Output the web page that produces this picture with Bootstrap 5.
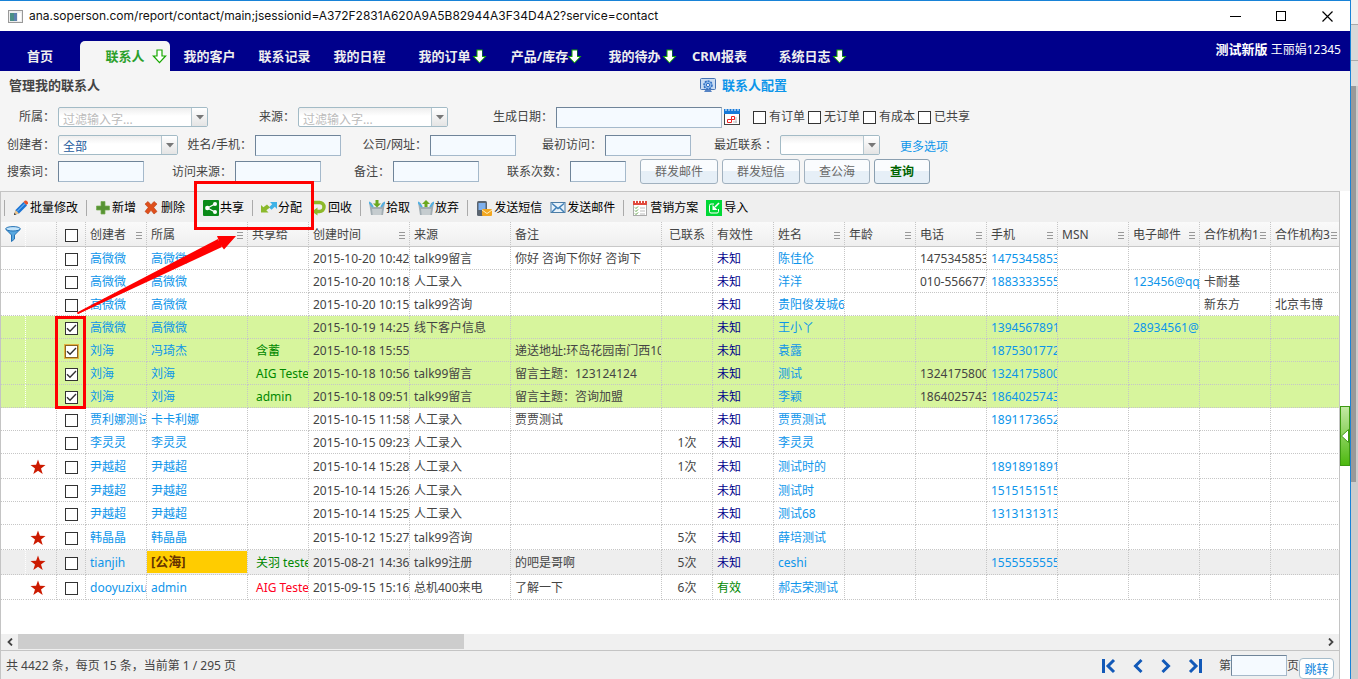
<!DOCTYPE html>
<html lang="zh-CN">
<head>
<meta charset="utf-8">
<meta name="viewport" content="width=device-width, initial-scale=1">
<title>管理我的联系人</title>
<link href="https://cdn.jsdelivr.net/npm/bootstrap@5.3.0/dist/css/bootstrap.min.css" rel="stylesheet">
<style>
body{font-family:"Noto Sans","Noto Sans CJK SC",sans-serif;font-size:12px;line-height:16px;color:#444;background:#d4d4d4;overflow:hidden}
a{color:#0d95ea;text-decoration:none}
button,input,select{font:inherit;line-height:16px}
svg{flex:none;display:block}
.app-window{background:#fff;border-top:1px solid #1883d7;border-right:1px solid #1883d7;min-width:0}
.title-row{height:30px;padding:0 8px;color:#111;font-family:Inter,sans-serif;gap:6px}
.title-row button{border:0;background:none;padding:0;width:46px;display:flex;justify-content:center}
.title-row .win-buttons{margin-right:-8px}
/* main menu */
.main-menu{background:#00008b;height:40px;color:#fff}
.main-menu a{color:#eee;font-size:13px;font-weight:700;width:75px;height:30px;line-height:30px;text-align:center;position:relative;white-space:nowrap}
.main-menu a.home-link{width:80px}
.main-menu a.wide{width:95px}
.main-menu a.current{width:90px;background:#f5f5f5;color:#2ca02c;border-radius:5px 5px 0 0;margin-right:2px}
.main-menu a svg{position:absolute;right:5px;top:8px}
.main-menu a.current svg{right:3px}
.user-box{padding:10px 9px 0 0}
.user-box b{font-size:13px}
/* filter form */
.filters{background:#f5f5f5;height:120px}
.filters h1{font-size:13px;line-height:20px;font-weight:700;margin:0;padding:4px 0 0 9px;width:700px}
.heading-row{height:32px}
.config-link{font-size:13px;font-weight:700;gap:6px;padding-top:6px}
.filter-row{height:28px;align-items:center;white-space:nowrap}
.filter-row.last-row{height:25px}
.filter-row>label.cap{flex:none;text-align:right;padding-right:3px}
.w1{width:58px}.w2{width:90px}.w3{width:108px}.w4{width:77px}.w5{width:89px}.w6{width:91px}.w7{width:72px}
.field{border:1px solid #a5b9cb;border-top-color:#6f8499;border-left-color:#6f8499;background:#f5faff;width:86px;height:21px;padding:0 3px;border-radius:0;flex:none;outline:0}
.field.date-field{width:166px}
.field.short-field{width:56px}
.calendar-icon{margin:0 13px 0 2px}
.action-set{margin-left:14px}
.combo{display:flex;width:150px;height:20px;border:1px solid #a3bbc6;border-radius:2px;background:linear-gradient(#eee,#fff 8px);flex:none;overflow:hidden}
.combo.c120{width:120px}.combo.c100{width:100px}
.combo input,.combo select{border:0;background:none;flex:1;min-width:0;padding:3px 0 0 4px;height:19px;color:#1c5a9c;appearance:none;outline:0}
.combo input::placeholder{color:#bbb;opacity:1}
.combo button{width:16px;border:0;border-left:1px solid #b5c6ce;background:linear-gradient(#fff,#e4e4e4);padding:0;display:flex;align-items:center;justify-content:center}
.tick{appearance:none;width:13px;height:13px;border:1px solid #333;background:#fff;margin:0;flex:none;display:block}
.tick:checked{background:#fff url("data:image/svg+xml,%3Csvg xmlns='http://www.w3.org/2000/svg' width='11' height='11'%3E%3Cpath d='M1 5.2l3 3L10 2' fill='none' stroke='%23333' stroke-width='1.4'/%3E%3C/svg%3E")}
.tick.focused{border-color:#8a6420;box-shadow:0 0 0 1px #e3b341}
.tick-label{gap:3px;margin-right:3px}
.soft-btn{height:25px;border:1px solid #a1b1bf;border-radius:3px;background:linear-gradient(#fafcfe 0 48%,#e6eff7 50%);color:#666;width:78px;margin-right:4px;padding:0}
.soft-btn.w66{width:66px}.soft-btn.w56{width:56px}
.soft-btn.go{color:#006400;font-weight:700;border-color:#8a9fb0}
/* grid */
.grid-panel{border:1px solid #c4c4c4;border-bottom:0;margin-right:10px;min-height:0}
.tool-row{background:#efefef;height:30px;gap:8px;padding:2px 0 0 3px}
.tool-row button{border:0;background:none;padding:0;color:#000;display:flex;align-items:center;gap:1px;white-space:nowrap}
.tool-row button.roomy{gap:2px}
.tool-row .divider{width:1px;height:16px;background:#aaa}
.share-gap{margin-left:10px}
.grid-scroll{overflow:hidden}
.contacts{table-layout:fixed;width:1341px;border-collapse:separate;border-spacing:0}
.contacts th,.contacts td{border-right:1px dotted #c6c6c6;border-bottom:1px dotted #c6c6c6;padding:2px 0 0 4px;height:23px;line-height:18px;overflow:hidden;white-space:nowrap;font-weight:400;vertical-align:middle}
.contacts th{height:25px;line-height:20px;background:linear-gradient(#fafafa,#efefef);border-bottom:1px solid #c8c8c8}
.contacts th .head-cell{display:flex;align-items:center;justify-content:space-between;padding-right:4px}
.contacts th .head-cell i{width:6px;height:7px;flex:none;background:repeating-linear-gradient(#999 0 1px,transparent 1px 3px)}
.contacts th:first-child,.contacts td:first-child{border-right-color:#fff}
.contacts .mid{text-align:center;padding:2px 0 0}
.contacts th.mid:first-child{padding:0}
.contacts .mid .tick,.contacts .mid svg{margin:0 auto}
.contacts .star-cell{padding:2px 0 0 4px}
.contacts .shared{padding-left:8px}
.contacts tr.starred td{height:25px}
.contacts tr.chosen td{background:#d7f59d}
.contacts tr.hovered td{background:#eee}
.contacts td.public-pool{padding:0}
.public-pool span{display:block;background:#fc0;color:#630;font-weight:700;font-size:13px;height:22px;line-height:21px;padding-left:4px}
.unknown{color:#00008b}
.ok-text{color:#080}
.warn-text{color:#f02}
.scroll-row{height:16px;background:#f0f0f0}
.scroll-row span{width:17px;display:flex;align-items:center;justify-content:center}
.scroll-row .thumb{width:33.3%;height:15px;background:#cdcdcd}
.foot-row{height:29px;background:#efefef;border-top:1px solid #c4c4c4;padding:1px 5px 0}
.foot-row .page-link-btn{border:0;background:none;padding:0}
.jump-btn{border:1px solid #a5bccb;border-radius:4px;background:#fff;color:#0d85dd;width:35px;height:21px;padding:3px 0 0;align-self:flex-end;line-height:14px}
.side-handle{position:absolute;right:0;top:405px;width:10px;height:60px;border:1px solid #3d9a12;background:linear-gradient(#c3e9a4,#4db80f);padding:0;display:flex;align-items:center}
.outer-strip{width:7px;flex:none;background:#ccc}
.outer-strip .s1{height:25px;background:#f0f0f0;border-bottom:1px solid #aaa}
.outer-strip .s2{height:36px;background:#d8d8d8;border-bottom:1px solid #aaa}
.outer-strip .s3{height:25px;background:#ddd}
.outer-strip .s4{height:396px;background:#999;margin-right:2px}
.annotation{position:absolute;left:0;top:0;pointer-events:none}
</style>
<script src="https://cdn.jsdelivr.net/npm/bootstrap@5.3.0/dist/js/bootstrap.bundle.min.js"></script>
</head>
<body>
<svg width="0" height="0" class="position-absolute" aria-hidden="true">
 <symbol id="down" viewBox="0 0 15 15"><path d="M5 1h5v6h3.6L7.5 13.6 1.4 7H5z" fill="#fff" stroke="#18a800" stroke-width="1.2"/></symbol>
 <symbol id="down-white" viewBox="0 0 15 15"><path d="M4.500 .5h6v6.500h4L7.500 14.500 .5 7h4z" fill="#18a800"/><path d="M5.500 1.500h4.500V8h2.500L7.500 13.200 2.500 8h3z" fill="#fff"/></symbol>
 <symbol id="caret" viewBox="0 0 8 5"><path d="M0 0h8L4 4.500z" fill="#777"/></symbol>
 <symbol id="star" viewBox="0 0 16 16"><path d="M8 .5l1.900 5.300 5.600.1-4.500 3.500 1.700 5.600L8 11.800 3.300 15 5 9.400.5 5.900l5.600-.1z" fill="#cc1a00"/></symbol>
</svg>
<div class="d-flex vh-100 position-relative">
 <div class="app-window d-flex flex-column flex-grow-1 position-relative">
  <header class="title-row d-flex align-items-center">
   <svg width="15" height="13" viewBox="0 0 15 13"><rect x=".5" y=".5" width="14" height="12" fill="#eee" stroke="#999"/><rect x="2" y="3" width="7" height="8" fill="#4b8f86"/><rect x="6" y="3" width="3" height="8" fill="#5d80b0"/><rect x="10" y="3" width="3" height="8" fill="#fff"/></svg>
   <span class="flex-grow-1">ana.soperson.com/report/contact/main;jsessionid=A372F2831A620A9A5B82944A3F34D4A2?service=contact</span>
   <div class="d-flex win-buttons">
    <button aria-label="最小化"><svg width="11" height="11"><path d="M0 5.500h11" stroke="#000"/></svg></button>
    <button aria-label="最大化"><svg width="11" height="11"><rect x=".5" y=".5" width="9" height="9" fill="none" stroke="#000"/></svg></button>
    <button aria-label="关闭"><svg width="11" height="11"><path d="M.5.5l10 10M10.500.5l-10 10" stroke="#000" stroke-width="1.200"/></svg></button>
   </div>
  </header>
  <nav class="main-menu d-flex align-items-end">
   <a class="home-link" href="#">首页</a>
   <a class="current" href="#">联系人<svg width="15" height="15"><use href="#down"/></svg></a>
   <a href="#">我的客户</a><a href="#">联系记录</a><a href="#">我的日程</a>
   <a class="wide" href="#">我的订单<svg width="15" height="15"><use href="#down-white"/></svg></a>
   <a class="wide" href="#">产品/库存<svg width="15" height="15"><use href="#down-white"/></svg></a>
   <a class="wide" href="#">我的待办<svg width="15" height="15"><use href="#down-white"/></svg></a>
   <a href="#">CRM报表</a>
   <a class="wide" href="#">系统日志<svg width="15" height="15"><use href="#down-white"/></svg></a>
   <div class="user-box ms-auto align-self-start"><b>测试新版</b> 王丽娟12345</div>
  </nav>

  <form class="filters" onsubmit="return false">
   <div class="heading-row d-flex align-items-start">
    <h1>管理我的联系人</h1>
    <a class="config-link d-flex align-items-center" href="#"><svg width="16" height="15" viewBox="0 0 16 15"><rect x=".5" y=".5" width="15" height="11" rx="1" fill="#c9dcf2" stroke="#4674b4"/><path d="M4 14h8l-2-3H6z" fill="#5583c4"/><circle cx="8" cy="7" r="4" fill="#8ab8ec" stroke="#2d6cc0" stroke-width="1.500" stroke-dasharray="2 1"/><circle cx="8" cy="7" r="1.600" fill="#fff" stroke="#2d6cc0"/></svg>联系人配置</a>
   </div>
   <div class="filter-row d-flex">
    <label class="cap w1" for="f1">所属：</label><div class="combo"><input id="f1" placeholder="过滤输入字..."><button aria-label="展开"><svg width="8" height="5"><use href="#caret"/></svg></button></div>
    <label class="cap w2" for="f2">来源：</label><div class="combo"><input id="f2" placeholder="过滤输入字..."><button aria-label="展开"><svg width="8" height="5"><use href="#caret"/></svg></button></div>
    <label class="cap w3" for="f3">生成日期：</label><input class="field date-field" id="f3">
    <svg class="calendar-icon" width="16" height="16" viewBox="0 0 16 16"><rect x=".5" y="1.500" width="15" height="14" fill="#fff" stroke="#444"/><rect x="0" y="0" width="16" height="5" fill="#1679d8"/><path d="M2 0v2M5 0v2M8 0v2M11 0v2M14 0v2" stroke="#fff"/><path d="M7.500 7.500h3v3h-3zM3.500 10.500h4v3h-4z" fill="none" stroke="#e22"/><path d="M12 8v6M9 13h4" stroke="#bbb"/></svg>
    <label class="tick-label d-flex align-items-center"><input type="checkbox" class="tick">有订单</label>
    <label class="tick-label d-flex align-items-center"><input type="checkbox" class="tick">无订单</label>
    <label class="tick-label d-flex align-items-center"><input type="checkbox" class="tick">有成本</label>
    <label class="tick-label d-flex align-items-center"><input type="checkbox" class="tick">已共享</label>
   </div>
   <div class="filter-row d-flex">
    <label class="cap w1" for="f4">创建者：</label><div class="combo c120"><select id="f4"><option>全部</option></select><button aria-label="展开"><svg width="8" height="5"><use href="#caret"/></svg></button></div>
    <label class="cap w4" for="f5">姓名/手机：</label><input class="field" id="f5">
    <label class="cap w5" for="f6">公司/网址：</label><input class="field" id="f6">
    <label class="cap w5" for="f7">最初访问：</label><input class="field" id="f7">
    <label class="cap w5" for="f8">最近联系 ：</label><div class="combo c100"><select id="f8"><option></option></select><button aria-label="展开"><svg width="8" height="5"><use href="#caret"/></svg></button></div>
    <a class="ms-3 ps-1 pt-1" href="#">更多选项</a>
   </div>
   <div class="filter-row last-row d-flex">
    <label class="cap w1" for="f9">搜索词：</label><input class="field" id="f9">
    <label class="cap w6" for="f10">访问来源：</label><input class="field" id="f10">
    <label class="cap w7" for="f11">备注：</label><input class="field" id="f11">
    <label class="cap w6" for="f12">联系次数：</label><input class="field short-field" id="f12">
    <div class="action-set d-flex"><button class="soft-btn">群发邮件</button><button class="soft-btn">群发短信</button><button class="soft-btn w66">查公海</button><button class="soft-btn w56 go">查询</button></div>
   </div>
  </form>

  <main class="grid-panel d-flex flex-column flex-grow-1">
   <div class="tool-row d-flex align-items-center">
    <span class="divider"></span>
    <button><svg width="16" height="16" viewBox="0 0 16 16"><path d="M1 15l1.500-5 8-8 3.500 3.500-8 8z" fill="#1b74d4"/><path d="M4 11.500l8-8" stroke="#8cc8ff"/><path d="M10.500 2l1.500-1.500c1.500-.5 3.500 1.500 3 3L13.500 5z" fill="#e5532d"/><path d="M1 15l1.500-5L6 13.500z" fill="#eec48a"/><path d="M1 15l.5-2 1.500 1.500z" fill="#222"/></svg>批量修改</button>
    <span class="divider"></span>
    <button><svg width="16" height="16" viewBox="0 0 16 16"><path d="M6 1.500h4V6h4.500v4H10v4H6v-4H1.500V6H6z" fill="#579334" stroke="#76ae50" stroke-width=".7"/></svg>新增</button>
    <button><svg width="16" height="16" viewBox="0 0 16 16"><path d="M1 4l3-2.500 3 3.300 3-3.300L13 4 9.800 7.500 13 11.500 10 14 7 10.300 4 14l-3-2.500 3.200-4z" fill="#df4f1c" stroke="#b83f14" stroke-width=".6"/></svg>删除</button>
    <button class="share-gap"><svg width="16" height="16" viewBox="0 0 16 16"><rect width="16" height="16" rx="1" fill="#0b8a18"/><path d="M12 4L4.500 8l7.500 4" fill="none" stroke="#fff" stroke-width="1.300"/><circle cx="12" cy="4" r="2" fill="#fff"/><circle cx="4.300" cy="8" r="2.200" fill="#fff"/><circle cx="12" cy="12" r="2" fill="#fff"/></svg>共享</button>
    <span class="divider"></span>
    <button><svg width="16" height="16" viewBox="0 0 16 16"><path d="M9 2h7v7l-2.200-2.200-3.300 3L8 7.300l3.200-3.100z" fill="#3fb2e6"/><path d="M0 5v7.500h7.500L5.300 10.300 9 7.500 6 4.500 2.400 7.300z" fill="#8bb92c"/></svg>分配</button>
    <button class="roomy"><svg width="16" height="16" viewBox="0 0 16 16"><path d="M2 2.500h7.500a4.500 4.500 0 010 9H6" fill="none" stroke="#8db92a" stroke-width="3.500"/><path d="M7.500 7.500v8L2 11.500z" fill="#8db92a"/></svg>回收</button>
    <span class="divider"></span>
    <button><svg width="16" height="16" viewBox="0 0 16 16"><path d="M0 2l3 1 1 4h8l1-4 3-1-2 13H2z" fill="#a2adb3"/><path d="M0 2l4 5M16 2l-4 5" stroke="#4fb0e4" stroke-width="2"/><path d="M3 9h10l-.7 6H3.700z" fill="#c5cccf"/><path d="M6.500 0h3v3.500H12L8 7.500 4 3.500h2.500z" fill="#6aa81e"/></svg>拾取</button>
    <button><svg width="16" height="16" viewBox="0 0 16 16"><path d="M0 2l3 1 1 4h8l1-4 3-1-2 13H2z" fill="#a2adb3"/><path d="M0 2l4 5M16 2l-4 5" stroke="#4fb0e4" stroke-width="2"/><path d="M3 9h10l-.7 6H3.700z" fill="#c5cccf"/><path d="M6.500 7V4H4l4-4 4 4H9.500v3z" fill="#6aa81e"/></svg>放弃</button>
    <span class="divider"></span>
    <button class="roomy"><svg width="16" height="16" viewBox="0 0 16 16"><rect x="1" y="1" width="10" height="15" rx="1.500" fill="#5b6570"/><rect x="2.500" y="3" width="7" height="7" fill="#7fb0ec"/><rect x="6" y="9" width="10" height="7" rx="1" fill="#f3a721"/><path d="M6 10l5 3.500 5-3.500" fill="none" stroke="#fff0b8"/></svg>发送短信</button>
    <button><svg width="16" height="16" viewBox="0 0 16 16"><rect x="1" y="2.500" width="14" height="10" fill="#e8f2fa" stroke="#4d7da5"/><path d="M2 3.500l6 5 6-5M2 12l4.500-4.500M14 12L9.500 7.500" fill="none" stroke="#4080b8" stroke-width="1.500"/></svg>发送邮件</button>
    <span class="divider"></span>
    <button class="roomy"><svg width="16" height="16" viewBox="0 0 16 16"><rect x="1.500" y="1.500" width="13" height="14" fill="#fff" stroke="#aaa"/><rect x="1" y="1" width="14" height="4" fill="#e0493d"/><path d="M3.500 0v3M6.500 0v3M9.500 0v3M12.500 0v3" stroke="#fff"/><path d="M3 7.500l1 1 2-2M3 10.500l1 1 2-2M3 13.500l1 1 2-2" stroke="#5a9f3e" fill="none"/><path d="M8 8h5M8 11h5M8 14h5" stroke="#bbb"/></svg>营销方案</button>
    <button class="roomy"><svg width="16" height="16" viewBox="0 0 16 16"><rect width="16" height="16" fill="#00d836"/><path d="M8 4H5Q3.500 4 3.500 5.500v6Q3.500 13 5 13h6q1.500 0 1.500-1.500V9" fill="none" stroke="#fff" stroke-width="1"/><path d="M13 3L9 7" stroke="#fff" stroke-width="1.600"/><path d="M6.500 5v5h5z" fill="#fff"/></svg>导入</button>
   </div>
   <div class="grid-scroll flex-grow-1">
    <table class="contacts">
     <colgroup><col style="width:25px"><col style="width:31px"><col style="width:29px"><col style="width:61px"><col style="width:101px"><col style="width:61px"><col style="width:101px"><col style="width:101px"><col style="width:151px"><col style="width:51px"><col style="width:61px"><col span="8" style="width:71px"></colgroup>
     <thead><tr>
      <th class="mid"><svg width="16" height="16" viewBox="0 0 16 16"><path d="M1 3.500l5.500 5.500v6.500L9.500 13V9L15 3.500z" fill="#58a8e0" stroke="#2472b4"/><ellipse cx="8" cy="2.800" rx="7.300" ry="2.200" fill="#c4e4fa" stroke="#2472b4"/></svg></th>
      <th></th>
      <th class="mid"><input type="checkbox" class="tick" aria-label="全选"></th>
      <th><div class="head-cell">创建者<i></i></div></th>
      <th><div class="head-cell">所属<i></i></div></th>
      <th>共享给</th>
      <th><div class="head-cell">创建时间<i></i></div></th>
      <th>来源</th><th>备注</th><th class="mid">已联系</th><th>有效性</th>
      <th><div class="head-cell">姓名<i></i></div></th>
      <th><div class="head-cell">年龄<i></i></div></th>
      <th><div class="head-cell">电话<i></i></div></th>
      <th><div class="head-cell">手机<i></i></div></th>
      <th><div class="head-cell">MSN<i></i></div></th>
      <th><div class="head-cell">电子邮件<i></i></div></th>
      <th><div class="head-cell">合作机构1<i></i></div></th>
      <th><div class="head-cell">合作机构3<i></i></div></th>
     </tr></thead>
     <tbody id="rows"></tbody>
    </table>
   </div>
   <div class="scroll-row d-flex">
    <span><svg width="6" height="8"><path d="M5 .5L1.500 4 5 7.500" fill="none" stroke="#444" stroke-width="1.800"/></svg></span>
    <div class="thumb"></div>
    <span class="ms-auto"><svg width="6" height="8"><path d="M1 .5L4.500 4 1 7.500" fill="none" stroke="#444" stroke-width="1.800"/></svg></span>
   </div>
   <footer class="foot-row d-flex align-items-center">
    <span>共 4422 条，每页 15 条，当前第 1 / 295 页</span>
    <div class="d-flex ms-auto me-3 gap-3">
     <button class="page-link-btn" aria-label="首页"><svg width="15" height="16"><path d="M2.500 1v14M13 2L7 8l6 6" fill="none" stroke="#1259b8" stroke-width="3"/></svg></button>
     <button class="page-link-btn" aria-label="上一页"><svg width="12" height="16"><path d="M9.500 2l-6 6 6 6" fill="none" stroke="#1259b8" stroke-width="3"/></svg></button>
     <button class="page-link-btn" aria-label="下一页"><svg width="12" height="16"><path d="M2.500 2l6 6-6 6" fill="none" stroke="#1259b8" stroke-width="3"/></svg></button>
     <button class="page-link-btn" aria-label="末页"><svg width="15" height="16"><path d="M12.500 1v14M2 2l6 6-6 6" fill="none" stroke="#1259b8" stroke-width="3"/></svg></button>
    </div>
    <label for="pg">第</label><input class="field short-field" id="pg"><label for="pg">页</label>
    <button class="jump-btn">跳转</button>
   </footer>
  </main>
  <button class="side-handle" aria-label="展开侧栏"><svg width="8" height="14"><path d="M7.500.5v13L.5 7z" fill="#fff" stroke="#3d9a12"/></svg></button>
 </div>
 <aside class="outer-strip"><div class="s1"></div><div class="s2"></div><div class="s3"></div><div class="s4"></div></aside>
 <svg class="annotation" width="320" height="420" fill="none" stroke="#f00" stroke-width="3"><rect x="195.500" y="182.500" width="117" height="46"/><rect x="56.500" y="317.500" width="28" height="90"/><path d="M77 313L219 241l-2-5 19 0-12 13.500-3-4L78 314z" fill="#f00" stroke="none"/><path d="M77 312.500L218 239l4 8L78 314z" fill="#f00" stroke="none"/></svg>
</div>
<script>
// [row flags, creator, owner, shared, shared colour, time, source, note, contacted, validity, name, phone, mobile, email, org1, org3]
const data = [
 ['','高微微','高微微','','','2015-10-20 10:42','talk99留言','你好 咨询下你好 咨询下','','未知','陈佳伦','1475345853','1475345853','','',''],
 ['','高微微','高微微','','','2015-10-20 10:18','人工录入','','','未知','洋洋','010-556677','1883333555','123456@qq','卡耐基',''],
 ['','高微微','高微微','','','2015-10-20 10:15','talk99咨询','','','未知','贵阳俊发城6','','','','新东方','北京韦博'],
 ['chosen','高微微','高微微','','','2015-10-19 14:25','线下客户信息','','','未知','王小丫','','1394567891','28934561@','',''],
 ['chosen focus','刘海','冯琦杰','含蓄','ok','2015-10-18 15:55','','递送地址:环岛花园南门西10','','未知','袁露','','1875301772','','',''],
 ['chosen','刘海','刘海','AIG Teste','ok','2015-10-18 10:56','talk99留言','留言主题：123124124','','未知','测试','1324175800','1324175800','','',''],
 ['chosen','刘海','刘海','admin','ok','2015-10-18 09:51','talk99留言','留言主题：咨询加盟','','未知','李颖','1864025743','1864025743','','',''],
 ['','贾利娜测试','卡卡利娜','','','2015-10-15 11:58','人工录入','贾贾测试','','未知','贾贾测试','','1891173652','','',''],
 ['','李灵灵','李灵灵','','','2015-10-15 09:23','人工录入','','1次','未知','李灵灵','','','','',''],
 ['starred','尹越超','尹越超','','','2015-10-14 15:28','人工录入','','1次','未知','测试时的','','1891891891','','',''],
 ['','尹越超','尹越超','','','2015-10-14 15:26','人工录入','','','未知','测试时','','1515151515','','',''],
 ['','尹越超','尹越超','','','2015-10-14 15:25','人工录入','','','未知','测试68','','1313131313','','',''],
 ['starred','韩晶晶','韩晶晶','','','2015-10-12 15:27','talk99咨询','','5次','未知','薛培测试','','','','',''],
 ['starred hovered','tianjih','[公海]','关羽 teste','ok','2015-08-21 14:36','talk99注册','的吧是哥啊','5次','未知','ceshi','','1555555555','','',''],
 ['starred','dooyuzixun','admin','AIG Teste','warn','2015-09-15 15:16','总机400来电','了解一下','6次','有效','郝志荣测试','','','','','']
];
const link = t => t ? `<a href="#">${t}</a>` : '';
document.getElementById('rows').innerHTML = data.map(r => {
 const [flags,creator,owner,shared,tone,time,src,note,times,valid,name,phone,mobile,mail,org1,org3] = r;
 const star = flags.includes('starred') ? '<svg width="16" height="16"><use href="#star"/></svg>' : '';
 const pool = owner === '[公海]';
 return `<tr class="${flags}"><td></td><td class="star-cell">${star}</td>
 <td class="mid"><input type="checkbox" aria-label="选择 ${creator}" class="tick ${flags.includes('focus') ? 'focused' : ''}" ${flags.includes('chosen') ? 'checked' : ''}></td>
 <td>${link(creator)}</td><td class="${pool ? 'public-pool' : ''}">${pool ? `<span>${owner}</span>` : link(owner)}</td>
 <td class="shared ${tone}-text">${shared}</td><td>${time}</td><td>${src}</td><td>${note}</td><td class="mid">${times}</td>
 <td class="${valid === '未知' ? 'unknown' : 'ok-text'}">${valid}</td><td>${link(name)}</td><td></td><td>${phone}</td><td>${link(mobile)}</td>
 <td></td><td>${link(mail)}</td><td>${org1}</td><td>${org3}</td></tr>`;
}).join('');
</script>
</body>
</html>
